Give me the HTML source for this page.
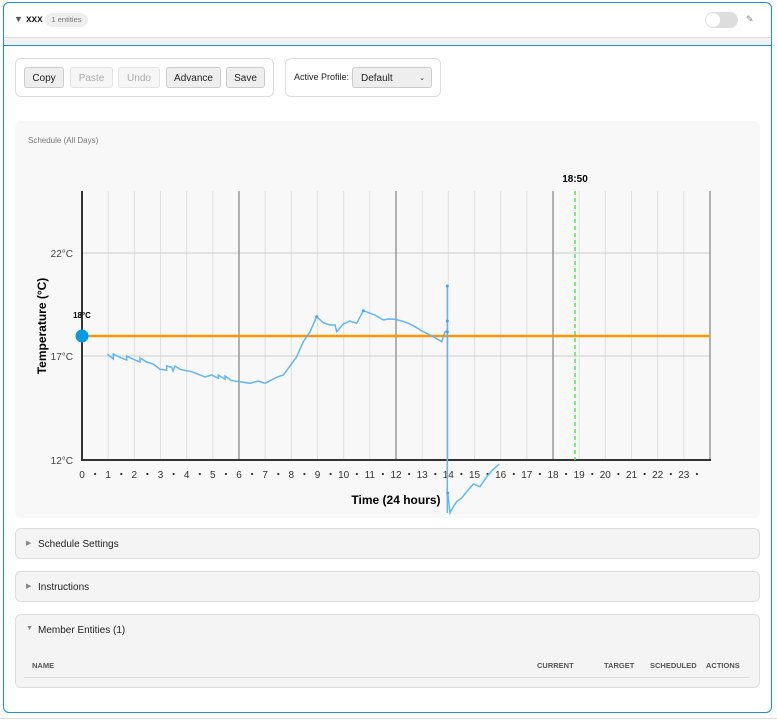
<!DOCTYPE html>
<html><head><meta charset="utf-8"><style>
*{box-sizing:border-box;margin:0;padding:0}
body{width:777px;height:721px;background:#fff;position:relative;overflow:hidden;font-family:"Liberation Sans",sans-serif;color:#222}
.a{position:absolute}
.btn{position:absolute;top:67px;height:21px;border:1px solid #ccc;border-radius:3px;background:#eee;font-size:10px;text-align:center;line-height:21px;color:#222}
.dis{background:#f6f6f6;color:#aaa;border-color:#e4e4e4}
.sec{position:absolute;left:15px;width:745px;background:#f4f4f4;border:1px solid #ddd;border-radius:6px;font-size:10px;color:#222}
.th{position:absolute;top:661px;font-size:7.5px;font-weight:bold;color:#555}
</style></head><body>
<div class="a" style="left:3px;top:2px;width:769px;height:711px;border:1px solid #1a8fd6;border-radius:6px"></div>
<div class="a" style="left:4px;top:37px;width:767px;height:8px;background:#f2f2f2;border-top:1px solid #ddd"></div>
<div class="a" style="left:4px;top:45px;width:767px;height:1px;background:#1a8fd6"></div>
<div class="a" style="left:0;top:718px;width:777px;height:1px;background:#ddd"></div>
<div class="a" style="left:14px;top:14px;font-size:9px;color:#555">▼</div>
<div class="a" style="left:26px;top:14px;font-size:10px;font-weight:bold">xxx</div>
<div class="a" style="left:45px;top:13px;width:43px;height:14px;border-radius:7px;background:#eee;font-size:7.5px;color:#777;text-align:center;line-height:14px">1 entities</div>
<div class="a" style="left:705px;top:12px;width:33px;height:16px;border-radius:8px;background:#ddd"></div>
<div class="a" style="left:706px;top:13px;width:14px;height:14px;border-radius:7px;background:#fff"></div>
<div class="a" style="left:746px;top:14px;font-size:9px;color:#888">✎</div>

<div class="a" style="left:15px;top:58px;width:259px;height:39px;border:1px solid #ddd;border-radius:6px"></div>
<div class="btn" style="left:24px;width:40px">Copy</div>
<div class="btn dis" style="left:70px;width:43px">Paste</div>
<div class="btn dis" style="left:118px;width:42px">Undo</div>
<div class="btn" style="left:166px;width:55px">Advance</div>
<div class="btn" style="left:226px;width:39px">Save</div>
<div class="a" style="left:285px;top:58px;width:156px;height:39px;border:1px solid #ddd;border-radius:6px"></div>
<div class="a" style="left:294px;top:72px;font-size:9px">Active Profile:</div>
<div class="btn" style="left:352px;width:80px;text-align:left;padding-left:8px">Default<span style="position:absolute;right:6px;font-size:7px">⌄</span></div>

<div class="a" style="left:15px;top:121px;width:745px;height:397px;background:#f8f8f8;border-radius:6px"></div>
<div class="a" style="left:28px;top:136px;font-size:8px;color:#777">Schedule (All Days)</div>
<svg class="a" style="left:0;top:0" width="777" height="721" font-family="Liberation Sans, sans-serif">
<g stroke="#e0e0e0" stroke-width="1">
<line x1="108.2" y1="191" x2="108.2" y2="460"/><line x1="134.3" y1="191" x2="134.3" y2="460"/><line x1="160.5" y1="191" x2="160.5" y2="460"/><line x1="186.7" y1="191" x2="186.7" y2="460"/><line x1="212.8" y1="191" x2="212.8" y2="460"/>
<line x1="265.2" y1="191" x2="265.2" y2="460"/><line x1="291.3" y1="191" x2="291.3" y2="460"/><line x1="317.5" y1="191" x2="317.5" y2="460"/><line x1="343.7" y1="191" x2="343.7" y2="460"/><line x1="369.8" y1="191" x2="369.8" y2="460"/>
<line x1="422.2" y1="191" x2="422.2" y2="460"/><line x1="448.3" y1="191" x2="448.3" y2="460"/><line x1="474.5" y1="191" x2="474.5" y2="460"/><line x1="500.7" y1="191" x2="500.7" y2="460"/><line x1="526.8" y1="191" x2="526.8" y2="460"/>
<line x1="579.2" y1="191" x2="579.2" y2="460"/><line x1="605.3" y1="191" x2="605.3" y2="460"/><line x1="631.5" y1="191" x2="631.5" y2="460"/><line x1="657.7" y1="191" x2="657.7" y2="460"/><line x1="683.8" y1="191" x2="683.8" y2="460"/>
</g>
<g stroke="#ccc"><line x1="82" y1="253" x2="710" y2="253"/><line x1="82" y1="356" x2="710" y2="356"/></g>
<g stroke="#999" stroke-width="1.5"><line x1="239" y1="191" x2="239" y2="460"/><line x1="396" y1="191" x2="396" y2="460"/><line x1="553" y1="191" x2="553" y2="460"/><line x1="710" y1="191" x2="710" y2="460"/></g>
<line x1="82" y1="191" x2="82" y2="460" stroke="#333" stroke-width="2"/>
<line x1="81" y1="460" x2="711" y2="460" stroke="#333" stroke-width="2"/>
<line x1="575" y1="191" x2="575" y2="460" stroke="#44ee44" stroke-width="1.5" stroke-dasharray="4,3"/>
<text x="575" y="182" font-size="10" font-weight="bold" text-anchor="middle">18:50</text>
<line x1="82" y1="336" x2="710" y2="336" stroke="#ff9800" stroke-width="2.5"/>
<circle cx="82" cy="336" r="6.5" fill="#039be5"/>
<text x="82" y="318" font-size="8" font-weight="bold" text-anchor="middle">18°C</text>
<g font-size="10" fill="#444" text-anchor="end"><text x="73" y="257">22°C</text><text x="73" y="360">17°C</text><text x="73" y="464">12°C</text></g>
<text transform="translate(46,326) rotate(-90)" font-size="12" font-weight="bold" text-anchor="middle">Temperature (°C)</text>
<text x="396" y="504" font-size="12" font-weight="bold" text-anchor="middle">Time (24 hours)</text>
<g font-size="10" fill="#333" text-anchor="middle">
<text x="82" y="478">0</text><text x="108.2" y="478">1</text><text x="134.3" y="478">2</text><text x="160.5" y="478">3</text><text x="186.7" y="478">4</text><text x="212.8" y="478">5</text><text x="239" y="478">6</text><text x="265.2" y="478">7</text><text x="291.3" y="478">8</text><text x="317.5" y="478">9</text><text x="343.7" y="478">10</text><text x="369.8" y="478">11</text><text x="396" y="478">12</text><text x="422.2" y="478">13</text><text x="448.3" y="478">14</text><text x="474.5" y="478">15</text><text x="500.7" y="478">16</text><text x="526.8" y="478">17</text><text x="553" y="478">18</text><text x="579.2" y="478">19</text><text x="605.3" y="478">20</text><text x="631.5" y="478">21</text><text x="657.7" y="478">22</text><text x="683.8" y="478">23</text>
</g>
<g fill="#333">
<circle cx="95.1" cy="474" r="1.1"/><circle cx="121.3" cy="474" r="1.1"/><circle cx="147.4" cy="474" r="1.1"/><circle cx="173.6" cy="474" r="1.1"/><circle cx="199.8" cy="474" r="1.1"/><circle cx="225.9" cy="474" r="1.1"/><circle cx="252.1" cy="474" r="1.1"/><circle cx="278.3" cy="474" r="1.1"/><circle cx="304.4" cy="474" r="1.1"/><circle cx="330.6" cy="474" r="1.1"/><circle cx="356.8" cy="474" r="1.1"/><circle cx="382.9" cy="474" r="1.1"/><circle cx="409.1" cy="474" r="1.1"/><circle cx="435.3" cy="474" r="1.1"/><circle cx="461.4" cy="474" r="1.1"/><circle cx="487.6" cy="474" r="1.1"/><circle cx="513.8" cy="474" r="1.1"/><circle cx="539.9" cy="474" r="1.1"/><circle cx="566.1" cy="474" r="1.1"/><circle cx="592.3" cy="474" r="1.1"/><circle cx="618.4" cy="474" r="1.1"/><circle cx="644.6" cy="474" r="1.1"/><circle cx="670.8" cy="474" r="1.1"/><circle cx="696.9" cy="474" r="1.1"/>
</g>
<polyline fill="none" stroke="#64b5f6" stroke-width="1.5" points="107.3,354 113.3,359 113.3,354 120,357.3 126.7,360 126.7,356 133.3,359.3 140,362 140,358 146.7,362 153.3,364 160,369.3 166.7,370 166.7,366 171.7,367.3 173,371 175,366 180,369.3 191.7,371.7 205,377 211.7,375 218.3,378.3 218.3,375 225,379.3 225,376 231.7,380.7 240,381.7 250,383.3 258.3,381 265,383.3 276.7,377.3 283.3,375 290,366 296.7,356.7 303.3,341.7 310,331.7 316.7,316.7 323.3,322.7 330,325 335,325 336.7,331.7 343.3,324 350,321 356.7,323.3 363.3,310.7 375,315 383.3,320 388.3,319 395,319.3 401.7,321 408.3,323.3 415,326.7 423.3,331.7 433.3,336.7 441.7,341.7 445,331.7 447.3,331.7 447.3,286 447.3,513"/>
<polyline fill="none" stroke="#64b5f6" stroke-width="1.5" points="447.7,493 450,513 453.3,506.7 456.7,501.7 461.7,498 466.7,491.7 473.3,484 480,486.7 486.7,476.7 493.3,469.3 499.3,464"/>
<g fill="#42a5f5"><circle cx="447.3" cy="286" r="1.5"/><circle cx="447.3" cy="321" r="1.5"/><circle cx="447.3" cy="331.7" r="1.5"/><circle cx="447.7" cy="493" r="1.5"/><circle cx="316.7" cy="316.7" r="1.5"/><circle cx="363.3" cy="310.7" r="1.5"/></g>
</svg>

<div class="sec" style="top:528px;height:31px"><span class="a" style="left:10px;top:10px;font-size:7px;color:#888">▶</span><span class="a" style="left:22px;top:10px">Schedule Settings</span></div>
<div class="sec" style="top:571px;height:31px"><span class="a" style="left:10px;top:10px;font-size:7px;color:#888">▶</span><span class="a" style="left:22px;top:10px">Instructions</span></div>
<div class="sec" style="top:614px;height:74px"><span class="a" style="left:10px;top:10px;font-size:7px;color:#888">▼</span><span class="a" style="left:22px;top:10px">Member Entities (1)</span></div>
<div class="a" style="left:24px;top:677px;width:726px;height:1px;background:#ddd"></div>
<div class="th" style="left:32px">NAME</div>
<div class="th" style="left:537px">CURRENT</div>
<div class="th" style="left:604px">TARGET</div>
<div class="th" style="left:650px">SCHEDULED</div>
<div class="th" style="left:706px">ACTIONS</div>
</body></html>
